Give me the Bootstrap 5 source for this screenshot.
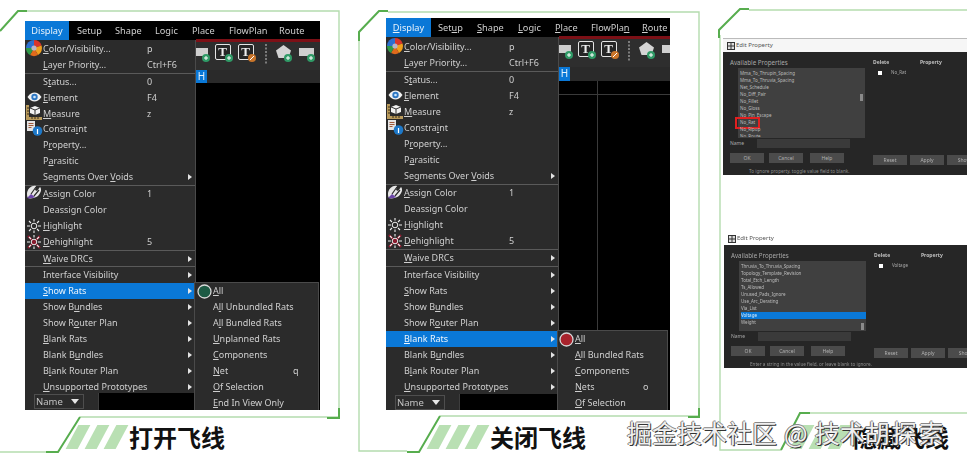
<!DOCTYPE html>
<html lang="en">
<head>
<meta charset="UTF-8">
<title>Show Rats</title>
<link href="https://cdn.jsdelivr.net/npm/bootstrap@5.3.0/dist/css/bootstrap.min.css" rel="stylesheet">
<script defer src="https://cdn.jsdelivr.net/npm/bootstrap@5.3.0/dist/js/bootstrap.bundle.min.js"></script>
<style>
html, body { margin: 0; background: #fff; overflow: hidden; }
.page { width: 967px; height: 461px; overflow: hidden; font-family: "Noto Sans", sans-serif; }
.frames { position: absolute; left: 0; top: 0; }
.panel-a { width: 295px; margin-left: 25px; padding-top: 21px; }
.panel-b { width: 284px; margin-left: 66px; padding-top: 18px; }
.panel-c { width: 244px; margin-left: 53px; padding-top: 38px; }

/* app screenshot */
.shot { background: #000; color: #cfcfcf; font-size: 9px; line-height: 16px; filter: blur(.45px); overflow: hidden; }
.panel-a .shot { height: 389px; }
.panel-b .shot { height: 392px; }
.menubar { height: 19px; line-height: 19px; flex: none; font-size: 9.2px; }
.menubar .open { background: #0a78d7; color: #e8f2fb; width: 44px; text-align: center; }
.panel-a .m1 { margin-left: 8px; width: 38px; } .panel-a .m2 { width: 40px; } .panel-a .m3 { width: 37px; } .panel-a .m4 { width: 37px; } .panel-a .m5 { width: 50px; }
.panel-b .open { width: 45px; }
.panel-b .m1 { margin-left: 7px; width: 39px; } .panel-b .m2 { width: 41px; } .panel-b .m3 { width: 37px; } .panel-b .m4 { width: 36px; } .panel-b .m5 { width: 51px; }
.shot-body { min-height: 0; }
.right-col { min-width: 0; }
.left-col { width: 171px; flex: none; }
.panel-b .left-col { width: 173px; }
.menu-list { background: #2b2b2b; flex: 1; overflow: hidden; border-right: 1px solid #4a4a4a; padding-top: 1px; }
.panel-b .menu-list { padding-top: 2px; }
.mrow { height: 15.9px; display: flex; align-items: center; white-space: nowrap; }
.panel-b .mrow { height: 16px; }
.mrow.on { background: #0a78d7; color: #eef6fd; }
.mrow .slot { width: 18px; flex: none; display: flex; justify-content: center; }
.mrow .slot svg { overflow: visible; flex: none; }
.mrow .lbl { width: 104px; flex: none; }
.panel-b .mrow .lbl { width: 105px; }
.mrow .key { flex: 1; }
.ico-up { margin-top: -2px; }
.caret { width: 0; height: 0; border-left: 4px solid #e4e4e4; border-top: 3px solid transparent; border-bottom: 3px solid transparent; margin-right: 3px; }
.msep { height: 1px; background: #5a5a5a; }
.namebar { height: 17px; background: #2b2b2b; padding-left: 9px; display: flex; align-items: center; }
.panel-b .namebar { height: 16px; }
.namebox { width: 50px; height: 15px; border: 1px solid #4e4e4e; line-height: 13px; padding: 0 4px 0 1px; display: flex; justify-content: space-between; align-items: center; color: #c4c4c4; font-size: 9.500px; }
.namedrop { width: 0; height: 0; border-top: 5px solid #e6e6e6; border-left: 4px solid transparent; border-right: 4px solid transparent; }
.namecell { width: 15px; height: 100%; border-right: 1px solid #3d3d3d; }
.nameend { flex: 1; height: 100%; background: #000; }

.red-strip { height: 3px; background: #7c1016; margin-top: -1px; flex: none; }
.toolbar { height: 28px; background: #2e2e2e; display: flex; align-items: flex-start; gap: 5px; padding-top: 2px; overflow: hidden; flex: none; }
.toolbar svg { flex: none; overflow: visible; }
.tabrow { height: 13px; background: #2a2a2a; flex: none; }
.panel-b .tabrow { height: 14px; }
.htab { width: 11px; height: 100%; background: #0a78d7; color: #e6f2fb; line-height: 13px; font-size: 10px; text-align: center; }
.canvas-area { flex: 1; background: #000; position: relative; }
.grid-v { position: absolute; left: 38px; top: 0; bottom: 0; width: 1px; background: #3a3a3a; }
.grid-h { position: absolute; left: 0; right: 0; top: 13px; height: 1px; background: #3a3a3a; }
.submenu { background: #2b2b2b; margin-left: -2px; margin-right: 1px; border: 1px solid #4a4a4a; border-bottom: 0; flex: none; }
.panel-a .submenu { height: 128px; }
.panel-b .submenu { height: 80px; margin-right: 2px; }
.srow { height: 16px; display: flex; align-items: center; white-space: nowrap; }
.srow .slot { width: 18px; flex: none; display: flex; justify-content: center; }
.panel-b .srow .slot { width: 17px; }
.srow .slbl { width: 80px; flex: none; }
.panel-b .srow .slbl { width: 68px; }

/* title under each picture */
.cap { display: flex; align-items: center; height: 26px; }
.panel-a .cap { margin-top: 14px; padding-left: 47px; }
.panel-b .cap { margin-top: 14px; padding-left: 47px; }
.panel-c .cap { margin-top: 56px; padding-left: 73px; }
.stripe { width: 12px; height: 24px; background: #b9e0b3; transform: skewX(-28deg); margin-right: 7px; flex: none; }
.cap-text { font-family: "Noto Sans CJK SC", sans-serif; font-weight: 700; font-size: 24px; line-height: 26px; color: #111; white-space: nowrap; }

/* edit property dialogs */
.dlg { font-size: 6.2px; line-height: 7px; color: #a8a8a8; filter: blur(.5px); white-space: nowrap; }
.dlg-second { margin: 57px 0 0 1px; }
.dlg-title { height: 14px; background: #f6f6f6; border-top: 1px solid #bbb; color: #555; font-size: 6px; line-height: 13px; padding-left: 4px; display: flex; align-items: center; gap: 1px; }
.dlg-second .dlg-title { height: 13px; border-top: 0; background: #fff; }
.dlg-body { height: 123px; background: #262626; display: flex; }
.dlg-left { width: 150px; padding: 7px 0 0 7px; flex: none; }
.dlg-right { flex: 1; padding-top: 7px; position: relative; }
.prop-list { width: 127px; height: 70px; margin: 2px 0 0 8px; background: #404040; padding: 1.500px 0 0 2px; position: relative; color: #bcbcbc; font-size: 4.500px; }
.prop-item { height: 7px; line-height: 7px; padding-right: 5px; }
.prop-item.sel { background: #0a78d7; color: #d8ecfb; }
.prop-item.cut { height: 4px; overflow: hidden; }
.hit { display: inline-block; outline: 2px solid #e02020; padding: 0 3px 1px; margin-left: -3px; }
.sbar { position: absolute; right: 2px; width: 3px; height: 7px; background: #8a8a8a; }
.name-row { display: flex; align-items: center; height: 9px; margin-top: 1px; font-size: 5px; }
.name-row span { width: 27px; }
.name-row i { width: 93px; height: 9px; background: #3a3a3a; display: block; }
.dlg-btns { display: flex; margin-top: 5px; font-size: 5px; }
.dlg-btn { width: 34px; height: 10px; line-height: 10px; text-align: center; background: #4b4b4b; color: #b0b0b0; flex: none; }
.dlg-left .dlg-btn + .dlg-btn { margin-left: 5px; }
.dlg-left .dlg-btn:last-child { margin-left: 7px; }
.dlg-note { margin: 5px 0 0 19px; color: #8e8e8e; font-size: 4.650px; }
.head-row { display: flex; font-weight: 700; color: #c0c0c0; font-size: 5px; }
.head-row span:first-child { width: 47px; }
.chk-row { display: flex; align-items: center; margin: 3px 0 0 5px; font-size: 4.500px; }
.chk-row b { width: 4px; height: 4px; background: #fff; display: block; margin-right: 9px; }
.dlg-right .dlg-btns { position: absolute; left: 0; top: 103px; margin: 0; gap: 3px; width: 94px; }
.wm { position: absolute; left: 627px; top: 417px; font-family: "Noto Sans CJK SC", sans-serif; font-size: 25px; line-height: 30px; color: #f0f0f0; white-space: nowrap; word-spacing: 1.500px; text-shadow: 1px 1px 0 #333, -1px 0 0 #777, 0 -1px 0 #888; }
.wm-end { letter-spacing: 2px; }
</style>
</head>
<body>
<div class="page d-flex position-relative">
  <svg class="frames" width="967" height="461" fill="none">
    <g stroke="#b4dcae" stroke-width="1.4">
      <path d="M26 11H339V417H80"/>
      <path d="M0 452H46"/>
      <path d="M359 40V451H407"/>
      <path d="M388 12H699V416H440"/>
      <path d="M720 35V450H781"/>
      <path d="M749 10H967"/>
      <path d="M810 413H967"/>
    </g>
    <g stroke="#57ad4e" stroke-width="2">
      <path d="M0 31L18 11H27"/>
      <path d="M46 452H58L80 417"/>
      <path d="M327 418H339V408"/>
      <path d="M359 41V32L379 11H388"/>
      <path d="M407 452H419L440 416"/>
      <path d="M688 417H699V408"/>
      <path d="M719 38V30L740 9H749"/>
      <path d="M781 450L800 413H810"/>
    </g>
  </svg>

  <div class="panel-a flex-none position-relative">
    <div class="shot d-flex flex-column" id="shotA"></div>
    <div class="cap"><span class="stripe"></span><span class="stripe"></span><span class="stripe"></span><span class="cap-text">打开飞线</span></div>
  </div>

  <div class="panel-b flex-none position-relative">
    <div class="shot d-flex flex-column" id="shotB"></div>
    <div class="cap"><span class="stripe"></span><span class="stripe"></span><span class="stripe"></span><span class="cap-text">关闭飞线</span></div>
  </div>

  <div class="panel-c flex-none position-relative">
    <div class="dlg" id="dlgA"></div>
    <div class="dlg dlg-second" id="dlgB"></div>
    <div class="cap"><span class="stripe"></span><span class="stripe"></span><span class="stripe"></span><span class="cap-text">隐藏飞线</span></div>
  </div>

  <div class="wm">掘金技术社区 @ 技术<span class="wm-end">胡探索</span></div>
</div>

<script>
var ICONS = {
  wheel: '<svg class="ico-up" width="16" height="16" viewBox="0 0 16 16"><path d="M8 8V0a8 8 0 0 1 7.6 5.5z" fill="#d9352b"/><path d="M8 8l7.6-2.5A8 8 0 0 1 12 15z" fill="#f0a01e"/><path d="M8 8l4 7a8 8 0 0 1-8 0z" fill="#e06a1c"/><path d="M8 8l-4 7A8 8 0 0 1 0 8z" fill="#2f9a48"/><path d="M8 8H0a8 8 0 0 1 8-8z" fill="#2b6fd0"/><circle cx="8" cy="8" r="2.6" fill="#b9b4c8"/></svg>',
  eye: '<svg class="ico-up" width="15" height="10" viewBox="0 0 15 10"><path d="M.5 5C3 1.5 5 .5 7.5.5S12 1.500 14.500 5C12 8.500 10 9.500 7.500 9.500S3 8.500.5 5z" fill="#f2f2f2"/><circle cx="7.500" cy="5" r="3.200" fill="#2f78c4"/><circle cx="7.500" cy="5" r="1.300" fill="#cfe6fa"/></svg>',
  measure: '<svg class="ico-up" width="16" height="15" viewBox="0 0 16 15"><path d="M0 0h3v12h13v3H0z" fill="#b99a5b"/><path d="M1 3h2M1 6h2M1 9h2M6 12v2M9 12v2M12 12v2" stroke="#3a2f18"/><path d="M9 1l5 2v5l-5 2-5-2V3z" fill="#f2f2f2"/><path d="M9 5v5M4 3l5 2 5-2" stroke="#333" fill="none"/></svg>',
  info: '<svg class="ico-up" width="16" height="15" viewBox="0 0 16 15"><path d="M1 0h8v10H1z" fill="#e4e4e4"/><path d="M2.500 2.500h5M2.500 4.500h5M2.500 6.500h3" stroke="#a05a3a"/><circle cx="11.500" cy="10" r="4.800" fill="#1d78c8"/><path d="M11.500 8v5" stroke="#fff" stroke-width="1.200"/></svg>',
  paint: '<svg class="ico-up" width="16" height="15" viewBox="0 0 16 15"><path d="M1 8C2 3 6 0 10 1l-1 4 2 1 3-4c2 2 1 6-2 9-3 2-8 3-10 2-1-1-1-3-1-5z" fill="#e6e6e6"/><path d="M1 13c3 1 6 0 8-1L5 9z" fill="#6b45a8"/><path d="M5 9l5-7M8 11l5-6" stroke="#2b2b2b" stroke-width="1.200"/></svg>',
  sun: '<svg width="16" height="14" viewBox="0 0 16 14"><circle cx="8" cy="7" r="2.800" fill="none" stroke="#eee"/><path d="M8 0v2.500M8 11.500V14M1 7h3M12 7h3M3 2l2 2M13 2l-2 2M3 12l2-2M13 12l-2-2" stroke="#eee" stroke-width="1.100"/></svg>',
  sunx: '<svg width="16" height="14" viewBox="0 0 16 14"><path d="M2 1l12 12M14 1L2 13" stroke="#8e1a2e" stroke-width="2.200"/><circle cx="8" cy="7" r="2.800" fill="none" stroke="#eee"/><path d="M8 0v2.500M8 11.500V14M1 7h3M12 7h3M3 2l2 2M13 2l-2 2M3 12l2-2M13 12l-2-2" stroke="#eee" stroke-width="1.100"/></svg>'
};

function ring(fill) {
  return '<svg width="15" height="15" viewBox="0 0 15 15"><circle cx="7.500" cy="7.500" r="6.500" fill="' + fill + '" stroke="#d8d8d8" stroke-width="1.300"/></svg>';
}

function badgeMark(cx, cy, edit) {
  return '<circle cx="' + cx + '" cy="' + cy + '" r="4" fill="' + (edit ? '#c9752a' : '#2f9a66') + '"/>' +
    '<path d="' + (edit ? 'M' + (cx - 2) + ' ' + (cy + 2) + 'l4-4' : 'M' + cx + ' ' + (cy - 2) + 'v4M' + (cx - 2) + ' ' + cy + 'h4') + '" stroke="#fff"/>';
}

function boxIcon(kind, edit) {
  var inner = kind == 'T'
    ? '<rect x=".5" y=".5" width="15" height="15" rx="1.500" fill="#262626" stroke="#e4e4e4"/><text x="7.500" y="12" font-family="Liberation Serif, serif" font-weight="700" font-size="13" text-anchor="middle" fill="#eee">T</text>'
    : kind == 'rect'
      ? '<path d="M0 4h15v8H0z" fill="#cfcfcf"/>'
      : '<path d="M7.500 1L15 6.500 12.500 14h-10L0 6.500z" fill="#d4d4d4"/>';
  return '<svg width="18" height="18" viewBox="0 0 18 18">' + inner + badgeMark(kind == 'T' ? 14 : 12, 14, edit) + '</svg>';
}

var MENU = [
  ['&Color/Visibility...', 'p', 0, 'wheel'], ['&Layer Priority...', 'Ctrl+F6'], '-',
  ['S&tatus...', '0'], ['&Element', 'F4', 0, 'eye'], ['&Measure', 'z', 0, 'measure'],
  ['Constra&int', '', 0, 'info'], ['P&roperty...'], ['P&arasitic'], ['Segments Over &Voids', '', 1], '-',
  ['&Assign Color', '1', 0, 'paint'], ['Deassign Color'], ['&Highlight', '', 0, 'sun'], ['&Dehighlight', '5', 0, 'sunx'], '-',
  ['&Waive DRCs', '', 1], '-',
  ['Interface Visibility', '', 1], ['&Show Rats', '', 1], ['Show B&undles', '', 1], ['Show R&outer Plan', '', 1],
  ['&Blank Rats', '', 1], ['Blank B&undles', '', 1], ['B&lank Router Plan', '', 1], ['&Unsupported Prototypes', '', 1]
];

function ul(s) { return s.replace(/&(.)/, '<u>$1</u>'); }

function menuHtml(active) {
  return MENU.map(function (m) {
    if (m == '-') return '<div class="msep"></div>';
    return '<div class="mrow' + (m[0].replace('&', '') == active ? ' on' : '') + '">' +
      '<span class="slot">' + (m[3] ? ICONS[m[3]] : '') + '</span>' +
      '<span class="lbl">' + ul(m[0]) + '</span>' +
      '<span class="key">' + (m[1] || '') + '</span>' +
      (m[2] ? '<span class="caret"></span>' : '') + '</div>';
  }).join('');
}

function subHtml(rows, fill) {
  return rows.map(function (r, i) {
    return '<div class="srow"><span class="slot">' + (i == 0 ? ring(fill) : '') + '</span>' +
      '<span class="slbl">' + ul(r[0]) + '</span><span>' + (r[1] || '') + '</span></div>';
  }).join('');
}

function buildShot(id, opts) {
  var bar = ['Display', 'Setup', 'Shape', 'Logic', 'Place', 'FlowPlan', 'Route'];
  var marks = opts.marks;
  var barHtml = bar.map(function (b, i) {
    var t = marks ? ul(marks[i]) : b;
    return '<span class="' + (i == 0 ? 'open' : 'm' + i) + '">' + t + '</span>';
  }).join('');
  document.getElementById(id).innerHTML =
    '<div class="menubar d-flex">' + barHtml + '</div>' +
    '<div class="shot-body d-flex flex-grow-1">' +
      '<div class="left-col d-flex flex-column">' +
        '<div class="menu-list">' + menuHtml(opts.active) + '</div>' +
        '<div class="namebar"><span class="namebox">Name<span class="namedrop"></span></span><span class="namecell"></span><span class="nameend"></span></div>' +
      '</div>' +
      '<div class="right-col d-flex flex-column flex-grow-1">' +
        '<div class="red-strip"></div>' +
        '<div class="toolbar">' + TOOLS + '</div>' +
        '<div class="tabrow"><div class="htab">H</div></div>' +
        '<div class="canvas-area">' + (opts.grid ? '<div class="grid-v"></div><div class="grid-h"></div>' : '') + '</div>' +
        '<div class="submenu">' + subHtml(opts.sub, opts.fill) + '</div>' +
      '</div>' +
    '</div>';
}

var partRect = '<svg width="14" height="18" viewBox="0 0 14 18"><path d="M0 4h12v8H0z" fill="#cfcfcf"/>' + badgeMark(10, 14) + '</svg>';
var dash = '<svg class="mx-1" width="2" height="21"><path d="M1 0v21" stroke="#ccc" stroke-dasharray="2 1.500"/></svg>';
var partRound = '<svg width="6" height="18" viewBox="0 0 6 18"><circle cx="8" cy="8" r="7" fill="#cfcfcf"/></svg>';
var TOOLS = partRect + boxIcon('T') + boxIcon('T', true) + dash + boxIcon('pent') + boxIcon('rect') + partRound;

buildShot('shotA', {
  active: 'Show Rats', fill: '#1d5a44',
  sub: [['&All'], ['A&ll Unbundled Rats'], ['A&ll Bundled Rats'], ['&Unplanned Rats'], ['&Components'], ['&Net', 'q'], ['&Of Selection'], ['&End In View Only']]
});

buildShot('shotB', {
  active: 'Blank Rats', fill: '#a8232c', grid: true,
  marks: ['&Display', 'Set&up', '&Shape', '&Logic', '&Place', 'FlowPla&n', '&Route'],
  sub: [['&All'], ['&All Bundled Rats'], ['&Components'], ['&Nets', 'o'], ['&Of Selection']]
});

var propIcon = '<svg width="8" height="8" viewBox="0 0 8 8"><rect width="8" height="8" fill="#333"/><path d="M1 1h2.500v2.500H1zM4.500 1H7v2.500H4.500zM1 4.500h2.500V7H1zM4.500 4.500H7V7H4.500z" fill="#ddd"/></svg>';

function buildDialog(id, o) {
  var items = o.items.map(function (t, i) {
    var cls = 'prop-item' + (t == o.selected ? ' sel' : '') + (i == o.items.length - 1 && o.cut ? ' cut' : '');
    return '<div class="' + cls + '">' + (t == o.hit ? '<span class="hit">' + t + '</span>' : t) + '</div>';
  }).join('');
  document.getElementById(id).innerHTML =
    '<div class="dlg-title">' + propIcon + '<span>Edit Property</span></div>' +
    '<div class="dlg-body">' +
      '<div class="dlg-left"><div>Available Properties</div>' +
        '<div class="prop-list">' + items + '<span class="sbar" style="top:' + o.thumb + 'px"></span></div>' +
        '<div class="name-row"><span>Name</span><i></i></div>' +
        '<div class="dlg-btns"><span class="dlg-btn">OK</span><span class="dlg-btn">Cancel</span><span class="dlg-btn">Help</span></div>' +
        '<div class="dlg-note">' + o.note + '</div>' +
      '</div>' +
      '<div class="dlg-right"><div class="head-row"><span>Delete</span><span>Property</span></div>' +
        '<div class="chk-row"><b></b><span>' + o.prop + '</span></div>' +
        '<div class="dlg-btns"><span class="dlg-btn">Reset</span><span class="dlg-btn">Apply</span><span class="dlg-btn">Show</span></div>' +
      '</div>' +
    '</div>';
}

buildDialog('dlgA', {
  items: ['Mma_To_Thrupin_Spacing', 'Mma_To_Thruvia_Spacing', 'Net_Schedule', 'No_Diff_Pair', 'No_Fillet', 'No_Gloss', 'No_Pin_Escape', 'No_Rat', 'No_Ripup', 'No_Route'],
  hit: 'No_Rat', cut: true, thumb: 26, prop: 'No_Rat',
  note: 'To ignore property, toggle value field to blank.'
});

buildDialog('dlgB', {
  items: ['Thruvia_To_Thruvia_Spacing', 'Topology_Template_Revision', 'Total_Etch_Length', 'Ts_Allowed', 'Unused_Pads_Ignore', 'Use_Arc_Derating', 'Via_List', 'Voltage', 'Weight'],
  selected: 'Voltage', thumb: 62, prop: 'Voltage',
  note: 'Enter a string in the value field, or leave blank to ignore.'
});
</script>
</body>
</html>
